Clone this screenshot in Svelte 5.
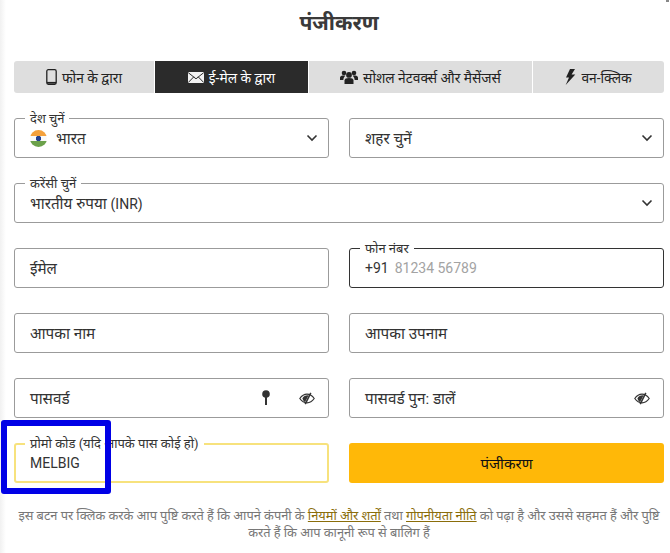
<script>
  const tabs = [
    { id: 'phone', label: 'फोन के द्वारा', w: 140 },
    { id: 'mail', label: 'ई-मेल के द्वारा', w: 153, active: true },
    { id: 'social', label: 'सोशल नेटवर्क्स और मैसेंजर्स', w: 223 },
    { id: 'bolt', label: 'वन-क्लिक', w: 131 }
  ];
</script>

{#snippet chevron()}
  <svg class="chev" viewBox="0 0 12 8" width="12" height="8"><path d="M1.500 1.500 6 6l4.500-4.500" fill="none" stroke="#333" stroke-width="1.600"/></svg>
{/snippet}

{#snippet eye()}
  <svg class="eye" viewBox="0 0 16 13" width="16" height="13">
    <path d="M.8 6.500C3 3.400 5.400 2.200 8 2.200s5 1.200 7.200 4.300C13 9.600 10.600 10.800 8 10.800S3 9.600.8 6.500Z" fill="none" stroke="#333" stroke-width="1.200"/>
    <path d="M3.400 6.500C4.600 4 6.500 3 9.600 3.200L6 10.200C4.800 9.500 4 8 3.400 6.500Z" fill="#333"/>
    <path d="M11.800.8 6.200 12.200" stroke="#333" stroke-width="1.500"/>
  </svg>
{/snippet}

<div class="page">
  <div class="corner"></div>
  <h1>पंजीकरण</h1>

  <div class="tabs">
    {#each tabs as t}
      <div class="tab" class:active={t.active} style="width:{t.w}px">
        {#if t.id === 'phone'}
          <svg viewBox="0 0 11 16" width="11" height="16"><rect x=".8" y=".7" width="9.400" height="14.600" rx="1.500" fill="none" stroke="#222" stroke-width="1.300"/><path d="M1 13.800h9" stroke="#222" stroke-width="1.800"/></svg>
        {:else if t.id === 'mail'}
          <svg viewBox="0 0 16 11" width="16" height="11"><rect width="16" height="11" fill="#f2f2f2"/><path d="M.2.600 8 6.800 15.800.6M.2 10.600 5.800 4.800M15.800 10.600 10.200 4.800" fill="none" stroke="#2b2b2b" stroke-width="1"/></svg>
        {:else if t.id === 'social'}
          <svg viewBox="0 0 18 14" width="18" height="14" fill="#222"><circle cx="9" cy="4.900" r="2.900"/><circle cx="4" cy="3" r="2.300"/><circle cx="14" cy="3" r="2.300"/><path d="M4.500 14v-3.500C4.500 8.800 6 8 9 8s4.500.8 4.500 2.500V14Z"/><path d="M0 10V7.600C0 6 1.500 5.400 4 5.400c.6 0 1 .1 1.400.3C4.300 6.800 3.400 8 3.300 10ZM18 10V7.600C18 6 16.500 5.400 14 5.400c-.6 0-1 .1-1.400.3 1.100 1.100 2 2.300 2.100 4.300Z"/></svg>
        {:else}
          <svg viewBox="0 0 11 16" width="11" height="16"><path d="M5 0 1 8.500h3L.7 16 10.300 5.600H6.600L10 0Z" fill="#222"/></svg>
        {/if}
        <span>{t.label}</span>
      </div>
    {/each}
  </div>

  <div class="form">
    <div class="field has-legend">
      <span class="legend">देश चुनें</span>
      <span class="flag"></span>
      <span class="val">भारत</span>
      {@render chevron()}
    </div>
    <div class="field"><span class="val">शहर चुनें</span>{@render chevron()}</div>

    <div class="field has-legend wide">
      <span class="legend">करेंसी चुनें</span>
      <span class="val">भारतीय रुपया <span class="latin">(INR)</span></span>
      {@render chevron()}
    </div>

    <div class="field"><span class="val">ईमेल</span></div>
    <div class="field has-legend dark">
      <span class="legend">फोन नंबर</span>
      <span class="latin">+91</span><span class="ph">81234 56789</span>
    </div>

    <div class="field"><span class="val">आपका नाम</span></div>
    <div class="field"><span class="val">आपका उपनाम</span></div>

    <div class="field">
      <span class="val">पासवर्ड</span>
      <svg class="key" viewBox="0 0 8 15" width="8" height="15"><circle cx="4" cy="4" r="3.800" fill="#333"/><rect x="3" y="6" width="2" height="9" fill="#333"/></svg>
      {@render eye()}
    </div>
    <div class="field"><span class="val">पासवर्ड पुन: डालें</span>{@render eye()}</div>

    <div class="field has-legend promo">
      <span class="legend">प्रोमो कोड (यदि आपके पास कोई हो)</span>
      <span class="latin">MELBIG</span>
      <span class="mark"></span>
    </div>
    <button class="submit">पंजीकरण</button>
  </div>

  <p class="terms">इस बटन पर क्लिक करके आप पुष्टि करते हैं कि आपने कंपनी के <u>नियमों और शर्तों</u> तथा <u>गोपनीयता नीति</u> को पढ़ा है और उससे सहमत हैं और पुष्टि करते हैं कि आप कानूनी रूप से बालिग हैं</p>
</div>

<style>
  :global(body) { margin: 0; background: #fff; }
  .page {
    position: relative;
    box-sizing: border-box;
    width: 670px;
    height: 553px;
    padding: 0 6px 0 14px;
    overflow: hidden;
    font-family: Roboto, "Noto Sans", sans-serif;
    color: #333;
    background: linear-gradient(90deg, #f1f1f1 0, #fff 6px);
  }
  .corner {
    position: absolute;
    right: 1px;
    top: 0;
    width: 3px;
    height: 2px;
    background: #888;
  }
  h1 {
    margin: 0;
    height: 61px;
    box-sizing: border-box;
    padding-top: 8px;
    font-size: 21px;
    line-height: 30px;
    font-weight: 700;
    text-align: center;
    color: #3a3a3a;
  }
  .tabs { display: flex; gap: 1px; height: 32px; }
  .tab {
    display: flex;
    align-items: center;
    justify-content: center;
    gap: 5px;
    background: #dedede;
    color: #222;
    font-size: 13.800px;
  }
  .tab:first-child { border-radius: 3px 0 0 3px; }
  .tab:last-child { border-radius: 0 3px 3px 0; }
  .tab.active { background: #2b2b2b; color: #fff; }
  .form {
    display: grid;
    grid-template-columns: 315px 315px;
    column-gap: 20px;
    row-gap: 25px;
    margin-top: 25px;
  }
  .field {
    position: relative;
    box-sizing: border-box;
    height: 40px;
    display: flex;
    align-items: center;
    padding: 0 15px;
    border: 1px solid #9b9b9b;
    border-radius: 3px;
    background: #fff;
  }
  .wide { grid-column: 1 / 3; }
  .dark { border-color: #333; }
  .promo { border: 2px solid #f7e27d; padding: 0 14px; }
  .legend {
    position: absolute;
    left: 10px;
    top: -8px;
    padding: 0 5px;
    background: #fff;
    font-size: 13px;
    line-height: 16px;
    white-space: nowrap;
  }
  .promo .legend { left: 9px; top: -9px; }
  .flag {
    width: 17px;
    height: 17px;
    border-radius: 50%;
    margin-right: 9px;
    background:
      radial-gradient(circle, #23408f 0 2.500px, transparent 3px),
      linear-gradient(#f4a13c 0 33%, #fafafa 33% 67%, #6ba14a 67%);
  }
  .val { color: #333; font-size: 15.250px; }
  .latin { font-size: 14px; color: #333; }
  .ph { color: #a3a3a3; margin-left: 6px; font-size: 14px; }
  .chev { position: absolute; right: 10px; top: 50%; margin-top: -4px; }
  .eye { position: absolute; right: 13px; top: 50%; margin-top: -6px; }
  .key { position: absolute; right: 58px; top: 50%; margin-top: -8px; }
  .mark {
    position: absolute;
    box-sizing: border-box;
    left: -15px;
    top: -25px;
    width: 110px;
    height: 74px;
    border: 6px solid #0000e6;
    border-radius: 3px;
    pointer-events: none;
  }
  .submit {
    height: 40px;
    border: 0;
    border-radius: 3px;
    background: #ffb808;
    color: #111;
    font: 400 15px Roboto, "Noto Sans", sans-serif;
  }
  .terms {
    margin: 24px 0 0;
    font-size: 12.840px;
    line-height: 17px;
    text-align: center;
    color: #777;
  }
  .terms u { color: #8a6d0a; }
</style>
